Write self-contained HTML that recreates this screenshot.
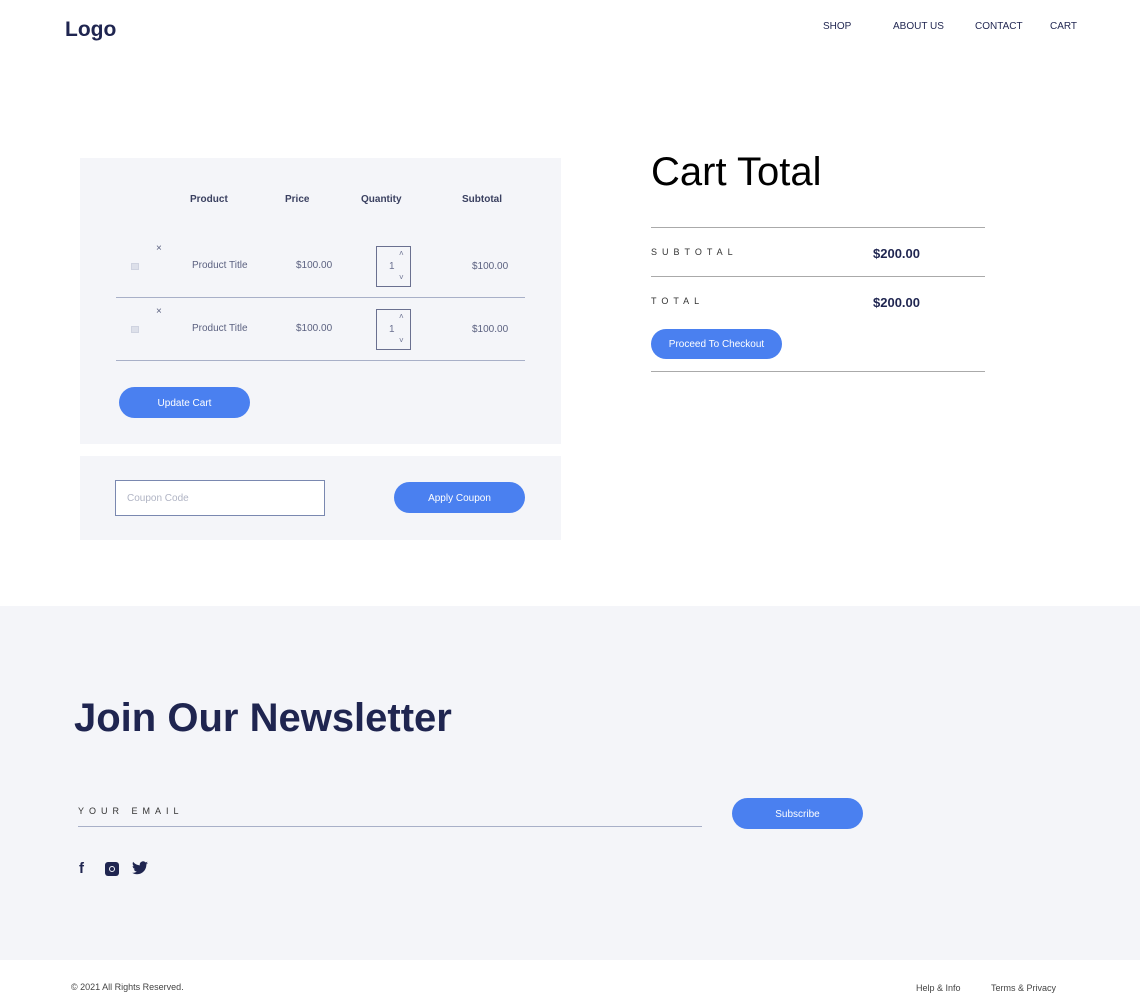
<!DOCTYPE html>
<html><head><style>
*{margin:0;padding:0;box-sizing:border-box}
body{width:1140px;height:1008px;background:#fff;font-family:"Liberation Sans",sans-serif;color:#1f2550;position:relative;overflow:hidden}
.a{position:absolute}
.btn{position:absolute;background:#4a80f0;color:#fff;border-radius:16px;font-size:10px;display:flex;align-items:center;justify-content:center;padding-top:1px}
.t{font-size:10px;color:#5b6180}
.h{font-size:10px;color:#3a4060;font-weight:bold}
.qty{position:absolute;width:35px;height:41px;border:1px solid #6a7090;font-size:10px;color:#6a7090}
.img{position:absolute;width:8px;height:7px;background:#dde0ea;border:1px solid #cfd3e0}
</style></head><body>
<div class="a" style="left:65px;top:18px;font-size:21px;font-weight:bold">Logo</div>
<div class="a h" style="left:823px;top:21px;font-weight:normal;color:#1f2550">SHOP</div>
<div class="a h" style="left:893px;top:21px;font-weight:normal;color:#1f2550">ABOUT US</div>
<div class="a h" style="left:975px;top:21px;font-weight:normal;color:#1f2550">CONTACT</div>
<div class="a h" style="left:1050px;top:21px;font-weight:normal;color:#1f2550">CART</div>

<div class="a" style="left:80px;top:158px;width:481px;height:286px;background:#f4f5f9"></div>
<div class="a h" style="left:190px;top:194px">Product</div>
<div class="a h" style="left:285px;top:194px">Price</div>
<div class="a h" style="left:361px;top:194px">Quantity</div>
<div class="a h" style="left:462px;top:194px">Subtotal</div>

<div class="img" style="left:131px;top:263px"></div>
<div class="a t" style="left:156px;top:243px">×</div>
<div class="a t" style="left:192px;top:260px">Product Title</div>
<div class="a t" style="left:296px;top:260px">$100.00</div>
<div class="qty" style="left:376px;top:246px"><span class="a" style="left:12px;top:14px">1</span><span class="a" style="left:22px;top:2px;font-size:8px">˄</span><span class="a" style="left:22px;top:26px;font-size:8px">˅</span></div>
<div class="a t" style="left:472px;top:261px">$100.00</div>
<div class="a" style="left:116px;top:297px;width:409px;height:1px;background:#a8b0c8"></div>

<div class="img" style="left:131px;top:326px"></div>
<div class="a t" style="left:156px;top:306px">×</div>
<div class="a t" style="left:192px;top:323px">Product Title</div>
<div class="a t" style="left:296px;top:323px">$100.00</div>
<div class="qty" style="left:376px;top:309px"><span class="a" style="left:12px;top:14px">1</span><span class="a" style="left:22px;top:2px;font-size:8px">˄</span><span class="a" style="left:22px;top:26px;font-size:8px">˅</span></div>
<div class="a t" style="left:472px;top:324px">$100.00</div>
<div class="a" style="left:116px;top:360px;width:409px;height:1px;background:#a8b0c8"></div>
<div class="btn" style="left:119px;top:387px;width:131px;height:31px">Update Cart</div>

<div class="a" style="left:80px;top:456px;width:481px;height:84px;background:#f4f5f9"></div>
<div class="a" style="left:115px;top:480px;width:210px;height:36px;border:1px solid #7a88b0;background:#fff;font-size:10px;color:#b0b4c4;padding:12px 11px">Coupon Code</div>
<div class="btn" style="left:394px;top:482px;width:131px;height:31px">Apply Coupon</div>

<div class="a" style="left:651px;top:150px;font-size:40px;color:#000">Cart Total</div>
<div class="a" style="left:651px;top:227px;width:334px;height:1px;background:#aaa"></div>
<div class="a" style="left:651px;top:247px;font-size:9px;letter-spacing:5px;color:#333">SUBTOTAL</div>
<div class="a" style="left:873px;top:246px;font-size:13px;font-weight:bold">$200.00</div>
<div class="a" style="left:651px;top:276px;width:334px;height:1px;background:#aaa"></div>
<div class="a" style="left:651px;top:296px;font-size:9px;letter-spacing:5px;color:#333">TOTAL</div>
<div class="a" style="left:873px;top:295px;font-size:13px;font-weight:bold">$200.00</div>
<div class="btn" style="left:651px;top:329px;width:131px;height:30px">Proceed To Checkout</div>
<div class="a" style="left:651px;top:371px;width:334px;height:1px;background:#aaa"></div>

<div class="a" style="left:0;top:606px;width:1140px;height:354px;background:#f4f5f9"></div>
<div class="a" style="left:74px;top:696px;font-size:40px;font-weight:bold">Join Our Newsletter</div>
<div class="a" style="left:78px;top:806px;font-size:9px;letter-spacing:5px;color:#333">YOUR EMAIL</div>
<div class="a" style="left:78px;top:826px;width:624px;height:1px;background:#a8b0c8"></div>
<div class="btn" style="left:732px;top:798px;width:131px;height:31px">Subscribe</div>
<div class="a" style="left:79px;top:860px;font-size:15px;font-weight:bold">f</div>
<div class="a" style="left:105px;top:862px;width:14px;height:14px;background:#1f2550;border-radius:3px"><div class="a" style="left:4px;top:4px;width:6px;height:6px;border:1.5px solid #f4f5f9;border-radius:50%"></div></div>
<svg class="a" style="left:132px;top:861px" width="16" height="14" viewBox="0 0 24 20"><path fill="#1f2550" d="M24 2.4a10 10 0 0 1-2.8.8A5 5 0 0 0 23.3.4a10 10 0 0 1-3.1 1.2A4.9 4.9 0 0 0 11.8 6 14 14 0 0 1 1.7.9a4.9 4.9 0 0 0 1.5 6.6A5 5 0 0 1 1 6.9a4.9 4.9 0 0 0 3.9 4.8 5 5 0 0 1-2.2.1 4.9 4.9 0 0 0 4.6 3.4A9.9 9.9 0 0 1 0 17.2 14 14 0 0 0 7.5 19.4c9.1 0 14-7.5 14-14v-.6A10 10 0 0 0 24 2.4z"/></svg>

<div class="a" style="left:71px;top:982px;font-size:9px;color:#444">© 2021 All Rights Reserved.</div>
<div class="a" style="left:916px;top:983px;font-size:9px;color:#444">Help &amp; Info</div>
<div class="a" style="left:991px;top:983px;font-size:9px;color:#444">Terms &amp; Privacy</div>
</body></html>
